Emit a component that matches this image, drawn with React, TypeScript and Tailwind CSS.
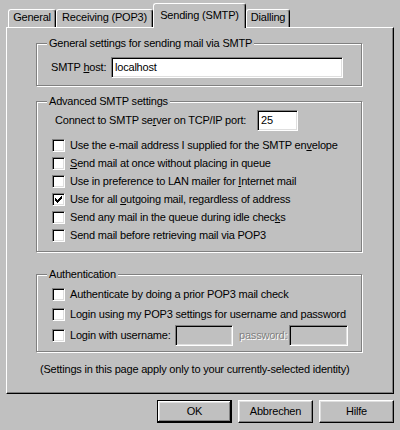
import type { ReactNode } from "react";

const sunken =
  "border border-t-[#808080] border-l-[#808080] border-r-white border-b-white shadow-[inset_1px_1px_0_#000,inset_-1px_-1px_0_#dfdfdf]";

// classic 7x7 check glyph, one string per pixel row
const checkRows = ["......X", ".....XX", "X...XXX", "XX.XXX.", "XXXXX..", ".XXX...", "..X...."];

function Tab({ label, active, width }: { label: string; active?: boolean; width: string }) {
  if (active) {
    return (
      <div
        className={`relative z-10 -mb-px flex h-[25px] justify-center rounded-t-[3px] border-l border-t border-r border-l-white border-t-white border-r-black bg-[#c0c0c0] pt-[5px] shadow-[inset_-1px_0_0_#808080] ${width}`}
      >
        {label}
      </div>
    );
  }
  return (
    <div
      className={`flex h-[18px] justify-center rounded-t-[3px] border-l border-t border-r border-l-white border-t-white border-r-black pt-[1px] shadow-[inset_-1px_0_0_#808080] ${width}`}
    >
      {label}
    </div>
  );
}

function Group({ title, className, children }: { title: string; className: string; children: ReactNode }) {
  return (
    <div
      className={`relative ml-[29px] w-[326px] border border-[#808080] shadow-[inset_1px_1px_0_#fff,1px_1px_0_#fff] ${className}`}
    >
      <span className="absolute left-[10px] top-[-7px] bg-[#c0c0c0] px-[2px] leading-[13px]">{title}</span>
      {children}
    </div>
  );
}

function Check({ checked, children, className = "" }: { checked?: boolean; children: ReactNode; className?: string }) {
  return (
    <div className={`flex h-[18px] items-center pl-[15px] ${className}`}>
      <span className={`flex h-[13px] w-[13px] shrink-0 items-center justify-center bg-white ${sunken}`}>
        {checked && (
          <svg width="7" height="7" viewBox="0 0 7 7" shapeRendering="crispEdges">
            {checkRows.map((row, y) =>
              row.split("").map((c, x) => (c === "X" ? <rect key={`${x}-${y}`} x={x} y={y} width="1" height="1" fill="#000" /> : null))
            )}
          </svg>
        )}
      </span>
      <span className="ml-[5px] whitespace-nowrap">{children}</span>
    </div>
  );
}

function Button({ label, isDefault }: { label: string; isDefault?: boolean }) {
  return (
    <button
      className={`flex h-[23px] w-[75px] items-center justify-center bg-[#c0c0c0] ${
        isDefault
          ? "border border-black shadow-[inset_-1px_-1px_0_#000,inset_1px_1px_0_#fff,inset_-2px_-2px_0_#808080,inset_2px_2px_0_#dfdfdf]"
          : "border border-t-white border-l-white border-r-black border-b-black shadow-[inset_-1px_-1px_0_#808080,inset_1px_1px_0_#dfdfdf]"
      }`}
    >
      {label}
    </button>
  );
}

export default function App() {
  return (
    <div className="h-[430px] w-[400px] bg-[#c0c0c0] pl-[6px] pr-[6px] pt-[3px] font-['Liberation_Sans',Arial,sans-serif] text-[11px] leading-[13px] tracking-[-0.2px] text-black">
      <div className="ml-[2px] flex h-[24px] items-end">
        <Tab label="General" width="w-[48px]" />
        <Tab label="Receiving (POP3)" width="w-[97px]" />
        <Tab label="Sending (SMTP)" width="w-[93px]" active />
        <Tab label="Dialling" width="w-[44px]" />
      </div>

      <div className="flex h-[367px] w-[388px] flex-col border border-t-white border-l-white border-r-black border-b-black shadow-[inset_-1px_-1px_0_#808080]">
        <Group title="General settings for sending mail via SMTP" className="mt-[15px] flex items-center pb-[7px] pl-[14px] pt-[13px]">
          <span className="w-[60px]">
            SMTP <span className="underline">h</span>ost:
          </span>
          <div className={`flex h-[21px] w-[232px] items-center bg-white pl-[3px] ${sunken}`}>localhost</div>
        </Group>

        <Group title="Advanced SMTP settings" className="mt-[15px] pb-[7px] pt-[8px]">
          <div className="flex items-center pl-[18px]">
            <span className="w-[202px] whitespace-nowrap">
              Connect to SMTP se<span className="underline">r</span>ver on TCP/IP port:
            </span>
            <div className={`flex h-[21px] w-[41px] items-center bg-white pl-[3px] ${sunken}`}>25</div>
          </div>
          <Check className="mt-[5px]">
            Use the e-mail address I supplied for the SMTP en<span className="underline">v</span>elope
          </Check>
          <Check>
            <span className="underline">S</span>end mail at once without placing in queue
          </Check>
          <Check>
            Use in preference to LAN mailer for <span className="underline">I</span>nternet mail
          </Check>
          <Check checked>
            Use for all <span className="underline">o</span>utgoing mail, regardless of address
          </Check>
          <Check>
            Send any mail in the queue during idle chec<span className="underline">k</span>s
          </Check>
          <Check>Send mail before retrieving mail via POP3</Check>
        </Group>

        <Group title="Authentication" className="mt-[22px] pb-[5px] pt-[10px]">
          <Check>Authenticate by doing a prior POP3 mail check</Check>
          <Check className="mt-[2px]">Login using my POP3 settings for username and password</Check>
          <div className="mt-[2px] flex h-[21px] items-center">
            <Check>
              <span className="inline-block w-[105px]">Login with username:</span>
            </Check>
            <div className={`h-[21px] w-[58px] bg-[#c0c0c0] ${sunken}`} />
            <span className="ml-[6px] w-[50px] text-[#808080] [text-shadow:1px_1px_0_#fff]">password:</span>
            <div className={`h-[21px] w-[59px] bg-[#c0c0c0] ${sunken}`} />
          </div>
        </Group>

        <div className="ml-[33px] mt-[11px] whitespace-nowrap">
          (Settings in this page apply only to your currently-selected identity)
        </div>
      </div>

      <div className="mt-[6px] flex justify-end gap-[6px]">
        <Button label="OK" isDefault />
        <Button label="Abbrechen" />
        <Button label="Hilfe" />
      </div>
    </div>
  );
}
